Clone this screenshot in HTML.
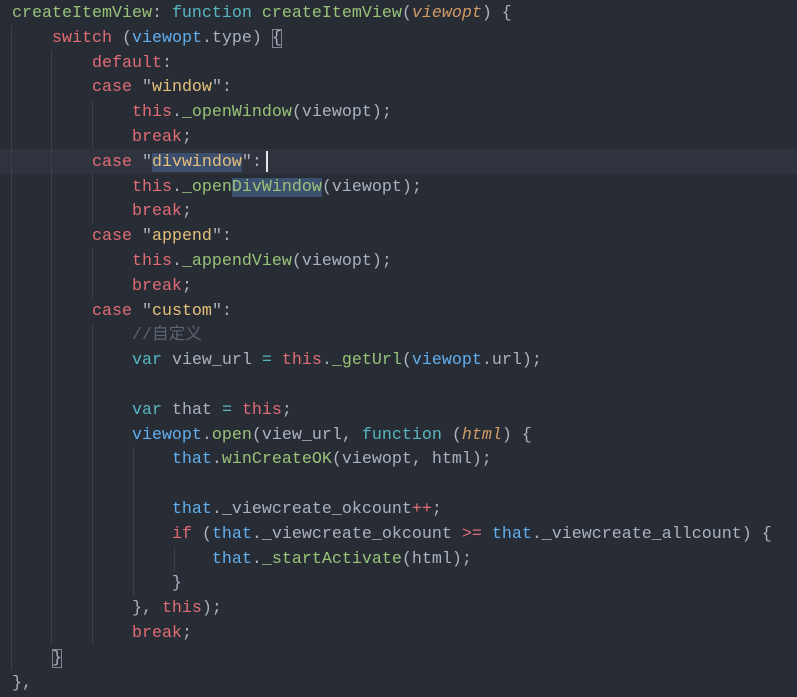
<!DOCTYPE html>
<html><head><meta charset="utf-8"><style>
html,body{margin:0;padding:0;background:#282c34;width:797px;height:697px;overflow:hidden}
#c{position:absolute;left:12px;top:2px;font-family:"Liberation Mono","Noto Sans CJK SC",monospace;font-size:16.67px;line-height:24.8px;color:#abb2bf;white-space:pre}
.hl{position:absolute;left:0;top:149px;width:797px;height:24.8px;background:#2f333d}
.g{position:absolute;width:1px;background:#3b3f47}
.k{color:#e06c75}.s{color:#e5c07b}.f{color:#98c379}.c{color:#56b6c2}.v{color:#61afef}.m{color:#5c6370}.p{color:#d19a66;font-style:italic}
.sel{background:#3d4f6e}
.br{outline:1px solid #7f848e;outline-offset:-1px}
</style></head><body>
<div class="hl"></div>
<div class="g" style="left:11px;top:25px;height:644.8px"></div>
<div class="g" style="left:51px;top:50px;height:595.2px"></div>
<div class="g" style="left:92px;top:99.6px;height:49.6px"></div>
<div class="g" style="left:92px;top:174px;height:49.6px"></div>
<div class="g" style="left:92px;top:248.4px;height:49.6px"></div>
<div class="g" style="left:92px;top:322.8px;height:322.4px"></div>
<div class="g" style="left:133px;top:446.8px;height:148.8px"></div>
<div class="g" style="left:174px;top:546px;height:24.8px"></div>
<div style="position:absolute;left:266px;top:151px;width:2px;height:21px;background:#e6e6e6"></div>
<div id="c"><span class="f">createItemView</span>: <span class="c">function</span> <span class="f">createItemView</span>(<span class="p">viewopt</span>) {
    <span class="k">switch</span> (<span class="v">viewopt</span>.type) <span class="br">{</span>
        <span class="k">default</span>:
        <span class="k">case</span> "<span class="s">window</span>":
            <span class="k">this</span>.<span class="f">_openWindow</span>(viewopt);
            <span class="k">break</span>;
        <span class="k">case</span> "<span class="s sel">divwindow</span>":
            <span class="k">this</span>.<span class="f">_open<span class="sel">DivWindow</span></span>(viewopt);
            <span class="k">break</span>;
        <span class="k">case</span> "<span class="s">append</span>":
            <span class="k">this</span>.<span class="f">_appendView</span>(viewopt);
            <span class="k">break</span>;
        <span class="k">case</span> "<span class="s">custom</span>":
            <span class="m">//自定义</span>
            <span class="c">var</span> view_url <span class="c">=</span> <span class="k">this</span>.<span class="f">_getUrl</span>(<span class="v">viewopt</span>.url);

            <span class="c">var</span> that <span class="c">=</span> <span class="k">this</span>;
            <span class="v">viewopt</span>.<span class="f">open</span>(view_url, <span class="c">function</span> (<span class="p">html</span>) {
                <span class="v">that</span>.<span class="f">winCreateOK</span>(viewopt, html);

                <span class="v">that</span>._viewcreate_okcount<span class="k">++</span>;
                <span class="k">if</span> (<span class="v">that</span>._viewcreate_okcount <span class="k">&gt;=</span> <span class="v">that</span>._viewcreate_allcount) {
                    <span class="v">that</span>.<span class="f">_startActivate</span>(html);
                }
            }, <span class="k">this</span>);
            <span class="k">break</span>;
    <span class="br">}</span>
},</div>
</body></html>
